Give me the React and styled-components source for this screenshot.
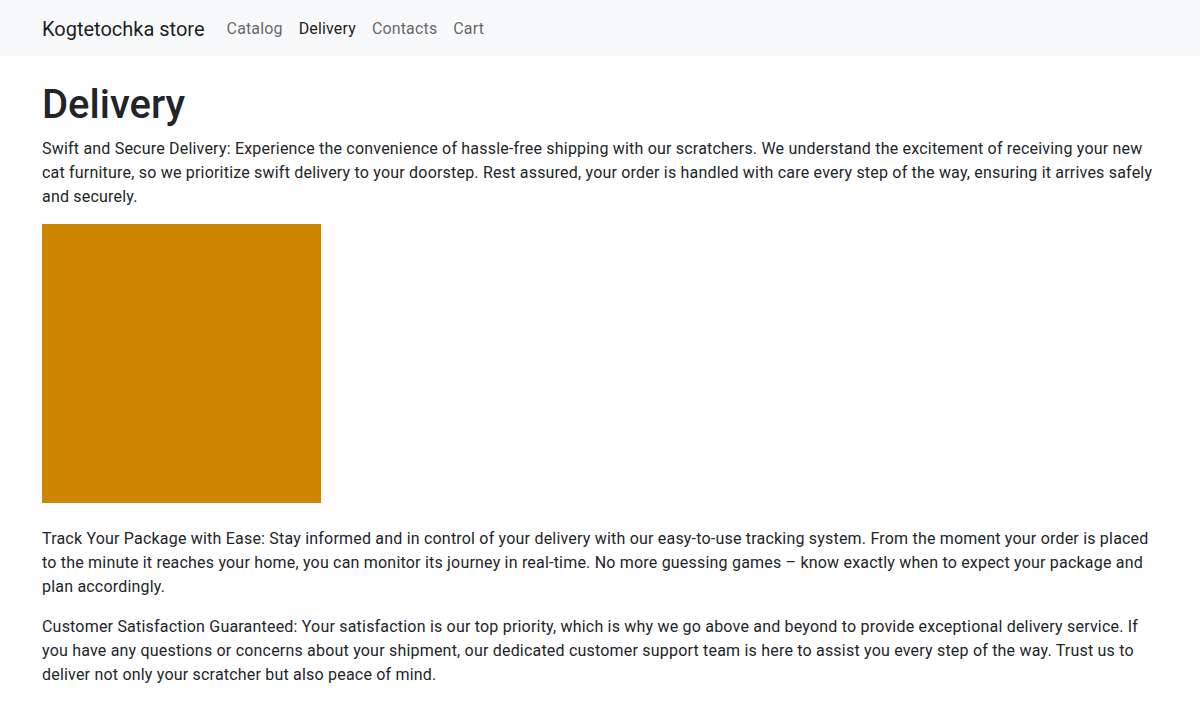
import React from 'react';
import styled, { createGlobalStyle } from 'styled-components';

const GlobalStyle = createGlobalStyle`
  * { box-sizing: border-box; }
  body {
    margin: 0;
    font-family: Roboto, "Noto Sans", "Liberation Sans", sans-serif;
    font-size: 16px;
    line-height: 1.5;
    color: #212529;
    background: #fff;
  }
`;

const Navbar = styled.nav`
  height: 56px;
  padding-top: 1px;
  background: #f8f9fa;
  display: flex;
  align-items: center;
`;

const Container = styled.div`
  width: 1140px;
  margin: 0 auto;
  padding: 0 12px;
  display: ${({ $flex }) => ($flex ? 'flex' : 'block')};
  align-items: center;
`;

const Brand = styled.a`
  font-size: 20px;
  line-height: 30px;
  padding: 5px 0;
  margin-right: 14px;
  color: rgba(0, 0, 0, 0.9);
  text-decoration: none;
`;

const NavList = styled.div`
  display: flex;
`;

const NavLink = styled.a`
  padding: 8px;
  letter-spacing: 0.15px;
  color: ${({ $active }) => ($active ? 'rgba(0, 0, 0, 0.9)' : 'rgba(0, 0, 0, 0.62)')};
  text-decoration: none;
`;

const Main = styled.main`
  margin-top: 25px;
`;

const Title = styled.h1`
  font-size: 40px;
  font-weight: 500;
  line-height: 1.2;
  margin: 0 0 8px;
`;

const Text = styled.p`
  margin: 0 0 16px;
  letter-spacing: 0.2px;
`;

const Picture = styled.div`
  width: 279px;
  height: 279px;
  background: #cd8500;
  margin: -1px 0 24px;
`;

const links = ['Catalog', 'Delivery', 'Contacts', 'Cart'];

export default function App() {
  return (
    <>
      <GlobalStyle />
      <Navbar>
        <Container $flex>
          <Brand href="#">Kogtetochka store</Brand>
          <NavList>
            {links.map(l => (
              <NavLink key={l} href="#" $active={l === 'Delivery'}>{l}</NavLink>
            ))}
          </NavList>
        </Container>
      </Navbar>
      <Main>
        <Container>
          <Title>Delivery</Title>
          <Text>
            Swift and Secure Delivery: Experience the convenience of hassle-free shipping with our scratchers. We understand the excitement of receiving your new cat furniture, so we prioritize swift delivery to your doorstep. Rest assured, your order is handled with care every step of the way, ensuring it arrives safely and securely.
          </Text>
          <Picture />
          <Text>
            Track Your Package with Ease: Stay informed and in control of your delivery with our easy-to-use tracking system. From the moment your order is placed to the minute it reaches your home, you can monitor its journey in real-time. No more guessing games – know exactly when to expect your package and plan accordingly.
          </Text>
          <Text>
            Customer Satisfaction Guaranteed: Your satisfaction is our top priority, which is why we go above and beyond to provide exceptional delivery service. If you have any questions or concerns about your shipment, our dedicated customer support team is here to assist you every step of the way. Trust us to deliver not only your scratcher but also peace of mind.
          </Text>
        </Container>
      </Main>
    </>
  );
}
